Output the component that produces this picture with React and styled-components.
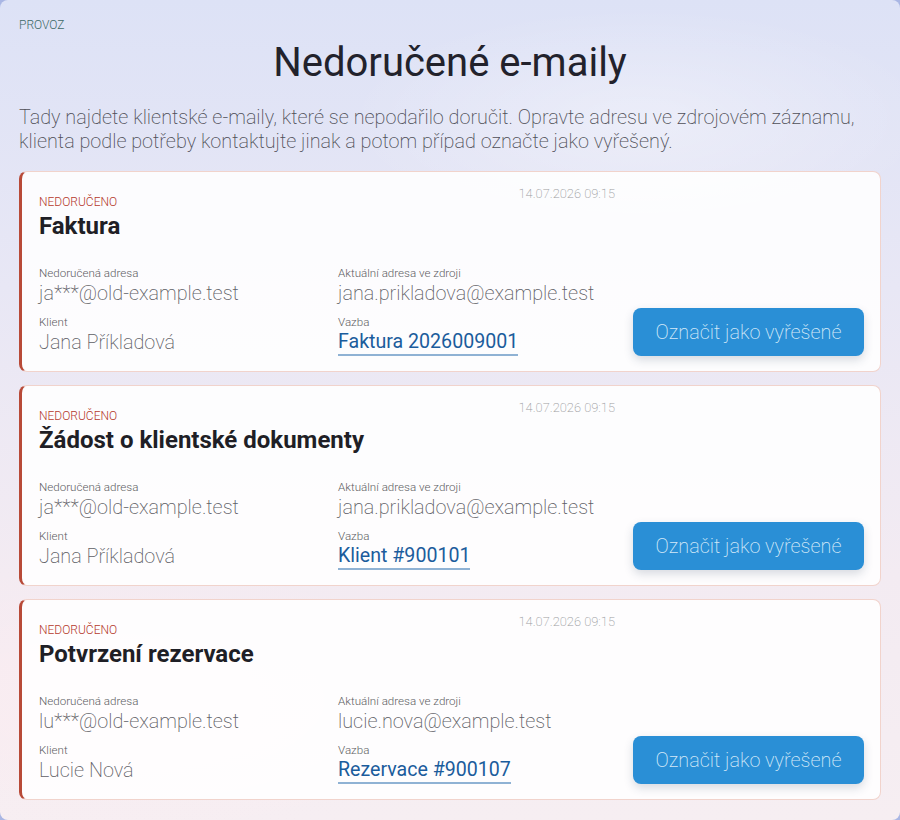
import React from 'react';
import styled, { createGlobalStyle } from 'styled-components';

const GlobalStyle = createGlobalStyle`
  html, body {
    margin: 0;
    padding: 0;
    background: #a9b6e4;
  }
  body {
    font-family: Roboto, "Liberation Sans", sans-serif;
  }
  * { box-sizing: border-box; }
`;

const Page = styled.div`
  min-height: 820px;
  border-radius: 8px;
  padding: 17px 19px 19px;
  background:
    radial-gradient(ellipse 420px 160px at 640px 120px, rgba(255,255,255,0.35), transparent 70%),
    radial-gradient(ellipse 500px 200px at 120px 700px, rgba(255,236,240,0.6), transparent 70%),
    linear-gradient(180deg, #dde2f6 0%, #e8e7f5 35%, #f3ebf2 70%, #f6eef2 100%);
`;

const Eyebrow = styled.div`
  font-size: 12px;
  line-height: 16px;
  color: #3f6a68;
  font-weight: 300;
`;

const Title = styled.h1`
  margin: 6px 0 19px;
  text-align: center;
  font-size: 40px;
  line-height: 48px;
  font-weight: 400;
  color: #22222c;
`;

const Intro = styled.p`
  margin: 0 0 17px;
  font-size: 19.8px;
  line-height: 24px;
  font-weight: 200;
  color: #4f4f57;
`;

const List = styled.div`
  display: flex;
  flex-direction: column;
  gap: 13px;
`;

const Card = styled.article`
  display: grid;
  grid-template-columns: 1fr 231px;
  column-gap: 18px;
  padding: 15px 16px 15px 17px;
  background: rgba(255, 255, 255, 0.88);
  border: 1px solid #f1d3cc;
  border-left: 3px solid #b84a38;
  border-radius: 8px;
`;

const Main = styled.div`
  display: flex;
  flex-direction: column;
`;

const Head = styled.div`
  display: flex;
  justify-content: space-between;
  align-items: flex-start;
`;

const HeadText = styled.div`
  padding-top: 8px;
`;

const Tag = styled.div`
  font-size: 12px;
  line-height: 14px;
  color: #b53a2c;
  font-weight: 300;
`;

const CardTitle = styled.h2`
  margin: 2px 0 0;
  font-size: 24px;
  line-height: 30px;
  font-weight: 700;
  color: #1f1f26;
`;

const Stamp = styled.div`
  font-size: 12.9px;
  line-height: 14px;
  font-weight: 200;
  color: #9d9da3;
`;

const Info = styled.dl`
  margin: 24px 0 0;
  display: grid;
  grid-template-columns: 1fr 1fr;
  column-gap: 22px;
  row-gap: 7px;
`;

const Field = styled.div`
  display: flex;
  flex-direction: column;
`;

const Label = styled.dt`
  font-size: 11.6px;
  line-height: 16px;
  font-weight: 300;
  color: #5d5d63;
`;

const Value = styled.dd`
  margin: 0;
  font-size: 19.8px;
  line-height: 26px;
  font-weight: 200;
  color: #5f5f66;
  white-space: nowrap;
`;

const Link = styled.a`
  align-self: flex-start;
  font-size: 19.6px;
  line-height: 24px;
  font-weight: 400;
  color: #1b5c9c;
  text-decoration: none;
  border-bottom: 2px solid #8fb2d4;
  white-space: nowrap;
`;

const Side = styled.div`
  display: flex;
  align-items: flex-end;
`;

const Button = styled.button`
  width: 100%;
  height: 48px;
  border: none;
  border-radius: 8px;
  background: #2a8fd6;
  color: #d4e9f8;
  font-family: inherit;
  font-size: 19.8px;
  font-weight: 200;
  box-shadow: 0 4px 10px rgba(40, 60, 90, 0.18);
  cursor: pointer;
`;

const items = [
  {
    title: 'Faktura',
    failed: 'ja***@old-example.test',
    current: 'jana.prikladova@example.test',
    client: 'Jana Příkladová',
    link: 'Faktura 2026009001',
  },
  {
    title: 'Žádost o klientské dokumenty',
    failed: 'ja***@old-example.test',
    current: 'jana.prikladova@example.test',
    client: 'Jana Příkladová',
    link: 'Klient #900101',
  },
  {
    title: 'Potvrzení rezervace',
    failed: 'lu***@old-example.test',
    current: 'lucie.nova@example.test',
    client: 'Lucie Nová',
    link: 'Rezervace #900107',
  },
];

const BounceCard = ({ item }) => (
  <Card>
    <Main>
      <Head>
        <HeadText>
          <Tag>NEDORUČENO</Tag>
          <CardTitle>{item.title}</CardTitle>
        </HeadText>
        <Stamp>14.07.2026 09:15</Stamp>
      </Head>
      <Info>
        <Field>
          <Label>Nedoručená adresa</Label>
          <Value>{item.failed}</Value>
        </Field>
        <Field>
          <Label>Aktuální adresa ve zdroji</Label>
          <Value>{item.current}</Value>
        </Field>
        <Field>
          <Label>Klient</Label>
          <Value>{item.client}</Value>
        </Field>
        <Field>
          <Label>Vazba</Label>
          <Link href="#">{item.link}</Link>
        </Field>
      </Info>
    </Main>
    <Side>
      <Button type="button">Označit jako vyřešené</Button>
    </Side>
  </Card>
);

export default function App() {
  return (
    <>
      <GlobalStyle />
      <Page>
        <Eyebrow>PROVOZ</Eyebrow>
        <Title>Nedoručené e-maily</Title>
        <Intro>
          Tady najdete klientské e-maily, které se nepodařilo doručit. Opravte adresu ve zdrojovém záznamu,
          klienta podle potřeby kontaktujte jinak a potom případ označte jako vyřešený.
        </Intro>
        <List>
          {items.map((item) => (
            <BounceCard key={item.title} item={item} />
          ))}
        </List>
      </Page>
    </>
  );
}
